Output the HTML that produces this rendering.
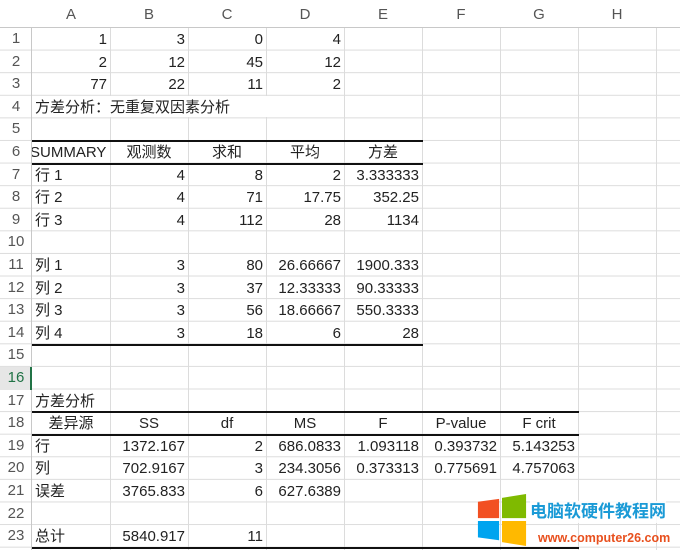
<!DOCTYPE html>
<html><head><meta charset="utf-8"><style>
*{margin:0;padding:0;box-sizing:border-box}
body{width:680px;height:550px;overflow:hidden;background:#fff;position:relative;font-family:"Liberation Sans","Noto Sans CJK SC",sans-serif;font-size:15px;color:#222}
#grid{position:absolute;left:0;top:27px;width:680px;height:523px;
background-image:linear-gradient(#dcdcdc 1px,transparent 1px);background-size:100% 22.6px}
.v{position:absolute;top:0;width:1px;height:550px;background:#dcdcdc}
#hdr{position:absolute;left:0;top:0;width:680px;height:28px;border-bottom:1px solid #c8c8c8;background:#fff}
#hdr span{position:absolute;top:0;width:78px;text-align:center;line-height:30px;color:#555;font-size:15px}
.rn{position:absolute;left:0;width:32px;text-align:center;color:#555;font-size:15px;line-height:22.6px;height:22.6px}
.r{position:absolute;left:0;width:680px;height:22.6px;line-height:23px}
.r i{font-style:normal;position:absolute;top:0;width:78px;padding:0 3px;white-space:nowrap}
.R{text-align:right}.C{text-align:center;overflow:hidden}
.a{left:32px}.b{left:110px}.c{left:188px}.d{left:266px}.e{left:344px}.f{left:422px}.g{left:500px}
.t{position:absolute;height:2px;background:#111}
</style></head><body>
<div id="grid"></div>
<div class="v" style="left:31px;background:#c8c8c8"></div>
<div class="v" style="left:110px"></div><div class="v" style="left:188px"></div><div class="v" style="left:266px"></div><div class="v" style="left:344px"></div><div class="v" style="left:422px"></div><div class="v" style="left:500px"></div><div class="v" style="left:578px"></div><div class="v" style="left:656px"></div>
<div id="hdr">
<span style="left:32px">A</span><span style="left:110px">B</span><span style="left:188px">C</span><span style="left:266px">D</span><span style="left:344px">E</span><span style="left:422px">F</span><span style="left:500px">G</span><span style="left:578px">H</span>
</div>
<div style="position:absolute;left:0;top:367px;width:31px;height:22.6px;background:#e6e6e6"></div>
<div style="position:absolute;left:30px;top:367px;width:2px;height:22.6px;background:#217346"></div>
<div class="rn" style="top:28px">1</div><div class="rn" style="top:50.6px">2</div><div class="rn" style="top:73.2px">3</div><div class="rn" style="top:95.8px">4</div><div class="rn" style="top:118.4px">5</div><div class="rn" style="top:141px">6</div><div class="rn" style="top:163.6px">7</div><div class="rn" style="top:186.2px">8</div><div class="rn" style="top:208.8px">9</div><div class="rn" style="top:231.4px">10</div><div class="rn" style="top:254px">11</div><div class="rn" style="top:276.6px">12</div><div class="rn" style="top:299.2px">13</div><div class="rn" style="top:321.8px">14</div><div class="rn" style="top:344.4px">15</div><div class="rn" style="top:367px;color:#217346">16</div><div class="rn" style="top:389.6px">17</div><div class="rn" style="top:412.2px">18</div><div class="rn" style="top:434.8px">19</div><div class="rn" style="top:457.4px">20</div><div class="rn" style="top:480px">21</div><div class="rn" style="top:502.6px">22</div><div class="rn" style="top:525.2px">23</div>

<div class="r" style="top:28px"><i class="a R">1</i><i class="b R">3</i><i class="c R">0</i><i class="d R">4</i></div>
<div class="r" style="top:50.6px"><i class="a R">2</i><i class="b R">12</i><i class="c R">45</i><i class="d R">12</i></div>
<div class="r" style="top:73.2px"><i class="a R">77</i><i class="b R">22</i><i class="c R">11</i><i class="d R">2</i></div>
<div class="r" style="top:95.8px"><i class="a" style="width:240px;background:#fff;height:21px">方差分析：无重复双因素分析</i></div>
<div class="r" style="top:141px"><i class="a" style="padding:0;overflow:hidden;text-indent:-2px">SUMMARY</i><i class="b C">观测数</i><i class="c C">求和</i><i class="d C">平均</i><i class="e C">方差</i></div>
<div class="r" style="top:163.6px"><i class="a">行 1</i><i class="b R">4</i><i class="c R">8</i><i class="d R">2</i><i class="e R">3.333333</i></div>
<div class="r" style="top:186.2px"><i class="a">行 2</i><i class="b R">4</i><i class="c R">71</i><i class="d R">17.75</i><i class="e R">352.25</i></div>
<div class="r" style="top:208.8px"><i class="a">行 3</i><i class="b R">4</i><i class="c R">112</i><i class="d R">28</i><i class="e R">1134</i></div>
<div class="r" style="top:254px"><i class="a">列 1</i><i class="b R">3</i><i class="c R">80</i><i class="d R">26.66667</i><i class="e R">1900.333</i></div>
<div class="r" style="top:276.6px"><i class="a">列 2</i><i class="b R">3</i><i class="c R">37</i><i class="d R">12.33333</i><i class="e R">90.33333</i></div>
<div class="r" style="top:299.2px"><i class="a">列 3</i><i class="b R">3</i><i class="c R">56</i><i class="d R">18.66667</i><i class="e R">550.3333</i></div>
<div class="r" style="top:321.8px"><i class="a">列 4</i><i class="b R">3</i><i class="c R">18</i><i class="d R">6</i><i class="e R">28</i></div>
<div class="r" style="top:389.6px"><i class="a">方差分析</i></div>
<div class="r" style="top:412.2px"><i class="a C">差异源</i><i class="b C">SS</i><i class="c C">df</i><i class="d C">MS</i><i class="e C">F</i><i class="f C">P-value</i><i class="g C">F crit</i></div>
<div class="r" style="top:434.8px"><i class="a">行</i><i class="b R">1372.167</i><i class="c R">2</i><i class="d R">686.0833</i><i class="e R">1.093118</i><i class="f R">0.393732</i><i class="g R">5.143253</i></div>
<div class="r" style="top:457.4px"><i class="a">列</i><i class="b R">702.9167</i><i class="c R">3</i><i class="d R">234.3056</i><i class="e R">0.373313</i><i class="f R">0.775691</i><i class="g R">4.757063</i></div>
<div class="r" style="top:480px"><i class="a">误差</i><i class="b R">3765.833</i><i class="c R">6</i><i class="d R">627.6389</i></div>
<div class="r" style="top:525.2px"><i class="a">总计</i><i class="b R">5840.917</i><i class="c R">11</i></div>

<div class="t" style="left:32px;width:391px;top:139.5px"></div>
<div class="t" style="left:32px;width:391px;top:162.5px"></div>
<div class="t" style="left:32px;width:391px;top:343.5px"></div>
<div class="t" style="left:32px;width:547px;top:411px"></div>
<div class="t" style="left:32px;width:547px;top:433.5px"></div>
<div class="t" style="left:32px;width:547px;top:546.5px"></div>

<svg style="position:absolute;left:476px;top:494px" width="52" height="52" viewBox="0 0 54 54">
<polygon points="2,8 24,5 24,25 2,25" fill="#f25022"/>
<polygon points="27,4 52,0 52,25 27,25" fill="#7fba00"/>
<polygon points="2,28 24,28 24,48 2,45" fill="#00a4ef"/>
<polygon points="27,28 52,28 52,54 27,50" fill="#ffb900"/>
</svg>
<div style="position:absolute;left:530px;top:501px;font-size:17px;font-weight:bold;color:#1a9ad6;white-space:nowrap;line-height:22px;background:rgba(255,255,255,0.85)">电脑软硬件教程网</div>
<div style="position:absolute;left:538px;top:531px;font-size:12.5px;font-weight:bold;color:#e8501e;line-height:14px;white-space:nowrap">www.computer26.com</div>
</body></html>
